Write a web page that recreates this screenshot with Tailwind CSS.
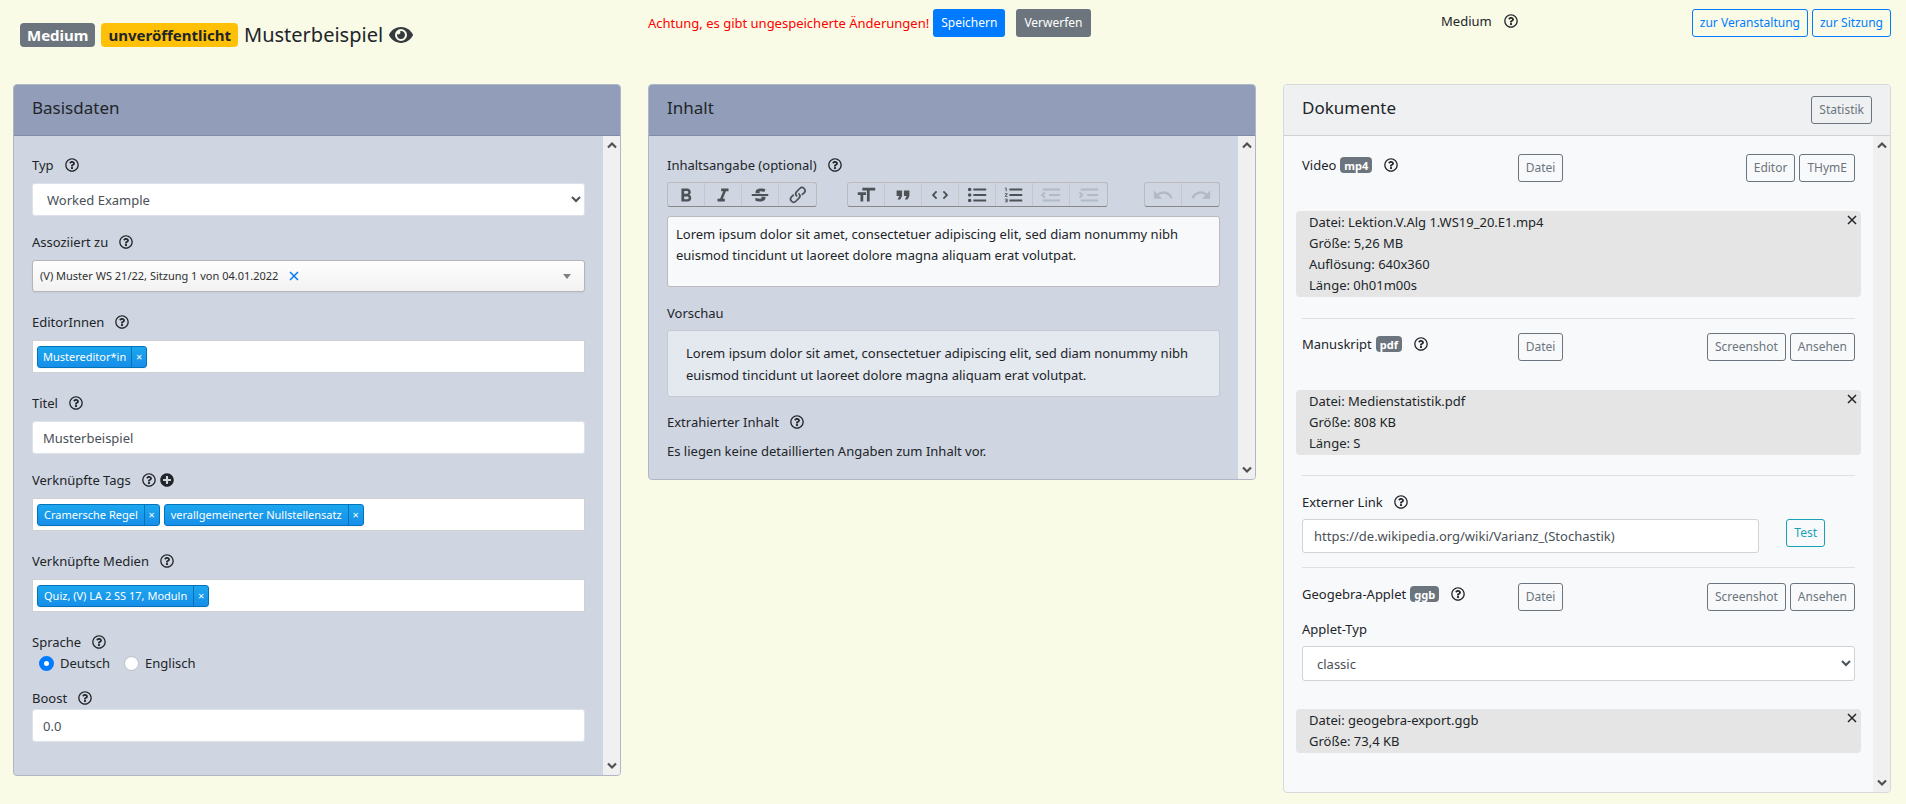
<!DOCTYPE html>
<html lang="de">
<head>
<meta charset="utf-8">
<title>Musterbeispiel – Medium</title>
<script src="https://cdn.jsdelivr.net/npm/@tailwindcss/browser@4"></script>
</head>
<body class="min-h-screen bg-[#f9fbe7] font-['Noto_Sans',sans-serif] text-[13px] leading-[22px] text-[#212529]">
<svg class="hidden" aria-hidden="true">
  <symbol id="help" viewBox="0 0 512 512"><path d="M256 8C119.043 8 8 119.083 8 256c0 136.997 111.043 248 248 248s248-111.003 248-248C504 119.083 392.957 8 256 8zm0 448c-110.532 0-200-89.431-200-200 0-110.495 89.472-200 200-200 110.491 0 200 89.471 200 200 0 110.53-89.431 200-200 200zm107.244-255.2c0 67.052-72.421 68.084-72.421 92.863V300c0 6.627-5.373 12-12 12h-45.647c-6.627 0-12-5.373-12-12v-8.659c0-35.745 27.1-50.034 47.579-61.516 17.561-9.845 28.324-16.541 28.324-29.579 0-17.246-21.999-28.693-39.784-28.693-23.189 0-33.894 10.977-48.942 29.969-4.057 5.12-11.46 6.071-16.666 2.124l-27.824-21.098c-5.107-3.872-6.251-11.066-2.644-16.363C184.846 131.491 214.94 112 261.794 112c49.071 0 101.45 38.304 101.45 88.8zM298 368c0 23.159-18.841 42-42 42s-42-18.841-42-42 18.841-42 42-42 42 18.841 42 42z"/></symbol>
  <symbol id="plus" viewBox="0 0 512 512"><path d="M256 8C119 8 8 119 8 256s111 248 248 248 248-111 248-248S393 8 256 8zm144 276c0 6.6-5.4 12-12 12h-92v92c0 6.6-5.4 12-12 12h-56c-6.6 0-12-5.4-12-12v-92h-92c-6.6 0-12-5.4-12-12v-56c0-6.6 5.4-12 12-12h92v-92c0-6.6 5.4-12 12-12h56c6.6 0 12 5.4 12 12v92h92c6.6 0 12 5.4 12 12v56z"/></symbol>
  <symbol id="up" viewBox="0 0 10 10"><path d="M1 7.5 5 3.500 9 7.500" fill="none" stroke="currentColor" stroke-width="2.200"/></symbol>
  <symbol id="down" viewBox="0 0 10 10"><path d="M1 2.500 5 6.500 9 2.500" fill="none" stroke="currentColor" stroke-width="2.200"/></symbol>
  <symbol id="close" viewBox="0 0 10 10"><path d="M1 1 9 9M9 1 1 9" fill="none" stroke="currentColor" stroke-width="1.500"/></symbol>
</svg>

<div class="pl-[13px] pr-[15px]">
  <header class="grid h-[84px] grid-cols-3 items-start gap-x-[27px]">
    <h1 class="flex items-center gap-[6px] pl-[7px] pt-[21px] text-xl leading-7">
      <span class="rounded bg-[#6c757d] px-[7px] pt-px text-[15px] font-bold leading-[23px] text-white">Medium</span>
      <span class="rounded bg-[#ffc107] px-[7px] pt-px text-[15px] font-bold leading-[23px]">unveröffentlicht</span>
      <span>Musterbeispiel</span>
      <svg class="h-[22px] w-6 fill-[#343a40]" viewBox="0 0 576 512"><path d="M572.52 241.4C518.29 135.59 410.93 64 288 64S57.68 135.64 3.48 241.41a32.35 32.35 0 0 0 0 29.19C57.71 376.41 165.07 448 288 448s230.32-71.64 284.52-177.41a32.35 32.35 0 0 0 0-29.19zM288 400a144 144 0 1 1 144-144 143.93 143.93 0 0 1-144 144zm0-240a95.31 95.31 0 0 0-25.31 3.79 47.85 47.85 0 0 1-66.9 66.9A95.78 95.78 0 1 0 288 160z"/></svg>
    </h1>
    <div class="flex items-center pt-[9px]">
      <span class="mr-1 text-[#f00]">Achtung, es gibt ungespeicherte Änderungen!</span>
      <button class="mr-[11px] h-7 rounded-[3px] bg-[#007bff] px-2 text-xs text-white">Speichern</button>
      <button class="h-7 rounded-[3px] bg-[#6c757d] px-2 text-xs text-white">Verwerfen</button>
    </div>
    <div class="grid grid-cols-[26%_1fr_auto] pt-[9px]">
      <span></span>
      <span class="flex h-6 items-center gap-3">Medium <svg class="size-[14px] fill-current"><use href="#help"/></svg></span>
      <span class="flex gap-1">
        <a href="#" class="flex h-7 items-center rounded-[3px] border border-[#007bff] px-[7px] text-xs text-[#007bff]">zur Veranstaltung</a>
        <a href="#" class="flex h-7 items-center rounded-[3px] border border-[#007bff] px-[7px] text-xs text-[#007bff]">zur Sitzung</a>
      </span>
    </div>
  </header>

  <main class="grid grid-cols-3 items-start gap-x-[27px]">
    <section class="overflow-hidden rounded border border-[#b0b6c6] bg-[#cfd5e1]">
      <h2 class="h-[51px] border-b border-[#7f8cab] bg-[#929eb9] px-[18px] pt-[11px] text-[17px] leading-6">Basisdaten</h2>
      <div class="flex">
        <form class="min-w-0 flex-1 px-[18px] pb-[33px] pt-[18px]">
          <div class="mb-[15px]">
            <div class="mb-[7px] flex items-center gap-[11px]"><label for="typ">Typ</label><svg class="size-[14px] fill-current"><use href="#help"/></svg></div>
            <select id="typ" class="h-[33px] w-full rounded-[3px] border border-[#dde1e9] bg-white px-[10px] text-[#495057]"><option>Worked Example</option></select>
          </div>
          <div class="mb-[19px]">
            <div class="mb-[7px] flex items-center gap-[11px]"><span id="assoc">Assoziiert zu</span><svg class="size-[14px] fill-current"><use href="#help"/></svg></div>
            <div role="combobox" aria-labelledby="assoc" class="flex h-8 items-center rounded-[3px] border border-[#b5b5b5] bg-linear-to-b from-[#fefefe] to-[#f2f2f2] px-[7px] text-[11px] text-[#303030] shadow-xs">
              (V) Muster WS 21/22, Sitzung 1 von 04.01.2022
              <button type="button" aria-label="Entfernen" class="ml-[11px] text-[#007bff]"><svg class="size-[10px]"><use href="#close"/></svg></button>
              <span class="ml-auto mr-[6px] border-x-4 border-t-[5px] border-x-transparent border-t-[#808080]"></span>
            </div>
          </div>
          <div class="mb-[19px]">
            <div class="mb-[7px] flex items-center gap-[11px]"><span>EditorInnen</span><svg class="size-[14px] fill-current"><use href="#help"/></svg></div>
            <div class="flex h-[33px] items-center gap-1 border border-[#d0d0d0] bg-white px-1">
              <span class="flex h-[22px] items-stretch rounded-[3px] border border-[#0073bb] bg-linear-to-b from-[#1da7ee] to-[#178ee9] text-[11px] leading-5 text-white shadow-xs"><span class="px-[5px]">Mustereditor*in</span><button type="button" class="w-[15px] border-l border-[#0073bb]">×</button></span>
            </div>
          </div>
          <div class="mb-[15px]">
            <div class="mb-[7px] flex items-center gap-[11px]"><label for="titel">Titel</label><svg class="size-[14px] fill-current"><use href="#help"/></svg></div>
            <input id="titel" value="Musterbeispiel" class="h-[33px] w-full rounded-[3px] border border-[#dde1e9] bg-white px-[10px] text-[#495057]">
          </div>
          <div class="mb-[19px]">
            <div class="mb-[7px] flex items-center gap-[11px]"><span>Verknüpfte Tags</span><span class="flex gap-1"><svg class="size-[14px] fill-current"><use href="#help"/></svg><svg class="size-[14px] fill-current"><use href="#plus"/></svg></span></div>
            <div class="flex h-[33px] items-center gap-1 border border-[#d0d0d0] bg-white px-1">
              <span class="flex h-[22px] items-stretch rounded-[3px] border border-[#0073bb] bg-linear-to-b from-[#1da7ee] to-[#178ee9] text-[11px] leading-5 text-white shadow-xs"><span class="px-[6px]">Cramersche Regel</span><button type="button" class="w-[15px] border-l border-[#0073bb]">×</button></span>
              <span class="flex h-[22px] items-stretch rounded-[3px] border border-[#0073bb] bg-linear-to-b from-[#1da7ee] to-[#178ee9] text-[11px] leading-5 text-white shadow-xs"><span class="px-[6px]">verallgemeinerter Nullstellensatz</span><button type="button" class="w-[15px] border-l border-[#0073bb]">×</button></span>
            </div>
          </div>
          <div class="mb-[19px]">
            <div class="mb-[7px] flex items-center gap-[11px]"><span>Verknüpfte Medien</span><svg class="size-[14px] fill-current"><use href="#help"/></svg></div>
            <div class="flex h-[33px] items-center gap-1 border border-[#d0d0d0] bg-white px-1">
              <span class="flex h-[22px] items-stretch rounded-[3px] border border-[#0073bb] bg-linear-to-b from-[#1da7ee] to-[#178ee9] text-[11px] leading-5 text-white shadow-xs"><span class="px-[6px]">Quiz, (V) LA 2 SS 17, Moduln</span><button type="button" class="w-[15px] border-l border-[#0073bb]">×</button></span>
            </div>
          </div>
          <div class="mb-[13px]">
            <div class="flex items-center gap-[11px]"><span>Sprache</span><svg class="size-[14px] fill-current"><use href="#help"/></svg></div>
            <div class="flex gap-[14px] pl-[7px] leading-[21px]">
              <label class="flex items-center gap-[6px]"><input type="radio" name="sprache" checked class="size-[15px] appearance-none rounded-full border border-[#b9bec8] bg-white checked:border-[5px] checked:border-[#007bff]">Deutsch</label>
              <label class="flex items-center gap-[6px]"><input type="radio" name="sprache" class="size-[15px] appearance-none rounded-full border border-[#b9bec8] bg-white checked:border-[5px] checked:border-[#007bff]">Englisch</label>
            </div>
          </div>
          <div class="flex items-center gap-[11px]"><label for="boost">Boost</label><svg class="size-[14px] fill-current"><use href="#help"/></svg></div>
          <input id="boost" value="0.0" class="block h-[33px] w-full rounded-[3px] border border-[#dde1e9] bg-white px-[10px] text-[#495057]">
        </form>
        <div class="flex w-[17px] flex-col items-center justify-between bg-[#f0f0f0] py-1 text-[#505050]"><svg class="size-[10px]"><use href="#up"/></svg><svg class="size-[10px]"><use href="#down"/></svg></div>
      </div>
    </section>

    <section class="overflow-hidden rounded border border-[#b0b6c6] bg-[#cfd5e1]">
      <h2 class="h-[51px] border-b border-[#7f8cab] bg-[#929eb9] px-[18px] pt-[11px] text-[17px] leading-6">Inhalt</h2>
      <div class="flex">
        <div class="min-w-0 flex-1 px-[18px] pb-[17px] pt-[18px]">
          <div class="mb-[6px] flex items-center gap-[11px]"><label for="inhalt">Inhaltsangabe (optional)</label><svg class="size-[14px] fill-current"><use href="#help"/></svg></div>
          <div class="mb-[9px] flex fill-[#4d5257] text-[#4d5257]">
            <div class="mr-[30px] flex divide-x divide-[#c5c7cb] rounded-[3px] border border-[#bbb] border-b-[#888]">
              <button class="flex h-[23px] w-[37px] items-center justify-center" aria-label="Fett"><svg class="size-[22px]" viewBox="0 0 24 24"><path d="M15.6 11.79c.97-.67 1.65-1.77 1.65-2.79 0-2.260-1.750-4-4-4H7v14h7.040c2.090 0 3.710-1.700 3.710-3.790 0-1.520-.86-2.820-2.150-3.420zM10 7.500h3c.83 0 1.500.67 1.500 1.500s-.67 1.500-1.500 1.500h-3v-3zm3.500 9H10v-3h3.500c.83 0 1.500.67 1.500 1.500s-.67 1.500-1.500 1.500z"/></svg></button>
              <button class="flex h-[23px] w-[37px] items-center justify-center" aria-label="Kursiv"><svg class="size-[22px]" viewBox="0 0 24 24"><path d="M10 5v3h2.210l-3.420 8H6v3h8v-3h-2.210l3.420-8H18V5z"/></svg></button>
              <button class="flex h-[23px] w-[37px] items-center justify-center" aria-label="Durchgestrichen"><svg class="size-[22px]" viewBox="0 0 24 24"><path d="M12.73 14l.28.14c.26.15.45.3.57.44.12.14.18.3.18.5 0 .3-.15.56-.44.75-.3.2-.76.3-1.390.3A13.520 13.520 0 0 1 7 14.950v3.370a10.640 10.640 0 0 0 4.840.88c1.260 0 2.350-.19 3.280-.56.93-.37 1.640-.9 2.140-1.570s.74-1.450.74-2.320c0-.26-.02-.51-.06-.75h-5.210zm-5.500-4c-.08-.34-.12-.7-.12-1.100 0-1.290.52-2.300 1.580-3.020 1.050-.72 2.500-1.080 4.340-1.080 1.620 0 3.280.34 4.970 1l-1.300 2.930c-1.470-.6-2.730-.9-3.800-.9-.55 0-.96.08-1.200.26-.26.17-.38.38-.38.64 0 .27.16.52.48.74.17.12.53.3 1.050.53H7.230zM3 13h18v-2H3v2z"/></svg></button>
              <button class="flex h-[23px] w-[37px] items-center justify-center" aria-label="Link"><svg class="size-[22px]" viewBox="0 0 24 24"><path d="M9.88 13.7a4.3 4.3 0 0 1 0-6.070l3.370-3.370a4.260 4.260 0 0 1 6.070 0 4.300 4.300 0 0 1 0 6.060l-1.960 1.720a.91.91 0 1 1-1.300-1.300l1.970-1.710a2.460 2.460 0 0 0-3.480-3.480l-3.380 3.370a2.460 2.460 0 0 0 0 3.480.91.91 0 1 1-1.300 1.300z"/><path d="M4.250 19.460a4.300 4.300 0 0 1 0-6.070l1.930-1.900a.91.91 0 1 1 1.300 1.300l-1.930 1.900a2.460 2.460 0 0 0 3.480 3.480l3.370-3.380c.96-.96.96-2.520 0-3.480a.91.91 0 1 1 1.300-1.300 4.300 4.300 0 0 1 0 6.070l-3.380 3.380a4.260 4.260 0 0 1-6.070 0z"/></svg></button>
            </div>
            <div class="mr-auto flex divide-x divide-[#c5c7cb] rounded-[3px] border border-[#bbb] border-b-[#888]">
              <button class="flex h-[23px] w-[37px] items-center justify-center" aria-label="Überschrift"><svg class="size-[22px]" viewBox="0 0 24 24"><path d="M12 9v3H9v7H6v-7H3V9h9zM8 4h14v3h-6v12h-3V7H8V4z"/></svg></button>
              <button class="flex h-[23px] w-[37px] items-center justify-center" aria-label="Zitat"><svg class="size-[22px]" viewBox="0 0 24 24"><path d="M6 17h3l2-4V7H5v6h3zm8 0h3l2-4V7h-6v6h3z"/></svg></button>
              <button class="flex h-[23px] w-[37px] items-center justify-center" aria-label="Code"><svg class="size-[22px]" viewBox="0 0 24 24"><path d="M18.200 12L15 15.200l1.400 1.400L21 12l-4.600-4.600L15 8.800l3.200 3.200zM5.800 12L9 8.800 7.600 7.400 3 12l4.600 4.600L9 15.200 5.800 12z"/></svg></button>
              <button class="flex h-[23px] w-[37px] items-center justify-center" aria-label="Aufzählung"><svg class="size-[22px]" viewBox="0 0 24 24"><path d="M4 4a2 2 0 1 0 0 4 2 2 0 0 0 0-4zm0 6a2 2 0 1 0 0 4 2 2 0 0 0 0-4zm0 6a2 2 0 1 0 0 4 2 2 0 0 0 0-4zm4 3h14v-2H8v2zm0-6h14v-2H8v2zm0-8v2h14V5H8z"/></svg></button>
              <button class="flex h-[23px] w-[37px] items-center justify-center" aria-label="Nummerierung"><svg class="size-[22px]" viewBox="0 0 24 24"><path d="M2 17h2v.5H3v1h1v.5H2v1h3v-4H2v1zm1-9h1V4H2v1h1v3zm-1 3h1.800L2 13.100v.9h3v-1H3.200L5 10.900V10H2v1zm5-6v2h14V5H7zm0 14h14v-2H7v2zm0-6h14v-2H7v2z"/></svg></button>
              <button disabled class="flex h-[23px] w-[37px] items-center justify-center" aria-label="Ausrücken"><svg class="size-[22px] opacity-20" viewBox="0 0 24 24"><path d="M3 19h19v-2H3v2zm7-6h12v-2H10v2zm-8.300-.3l2.800 2.900L6 14.200 4 12l2-2-1.400-1.500L1 12l.7.7zM3 5v2h19V5H3z"/></svg></button>
              <button disabled class="flex h-[23px] w-[37px] items-center justify-center" aria-label="Einrücken"><svg class="size-[22px] opacity-20" viewBox="0 0 24 24"><path d="M3 19h19v-2H3v2zm7-6h12v-2H10v2zm-6.900-1L1 14.200l1.400 1.400L6 12l-.7-.7-2.800-2.800L1 9.900 3.100 12zM3 5v2h19V5H3z"/></svg></button>
            </div>
            <div class="flex divide-x divide-[#c5c7cb] rounded-[3px] border border-[#bbb] border-b-[#888]">
              <button disabled class="flex h-[23px] w-[37px] items-center justify-center" aria-label="Rückgängig"><svg class="size-[22px] opacity-20" viewBox="0 0 24 24"><path d="M12.500 8c-2.600 0-5 1-6.900 2.600L2 7v9h9l-3.600-3.600A8 8 0 0 1 20 16l2.400-.8a10.500 10.500 0 0 0-10-7.200z"/></svg></button>
              <button disabled class="flex h-[23px] w-[37px] items-center justify-center" aria-label="Wiederholen"><svg class="size-[22px] opacity-20" viewBox="0 0 24 24"><path d="M18.400 10.600a10.500 10.500 0 0 0-16.900 4.600L4 16a8 8 0 0 1 12.700-3.600L13 16h9V7l-3.600 3.600z"/></svg></button>
            </div>
          </div>
          <textarea id="inhalt" class="mb-[15px] block h-[71px] w-full resize-none rounded-[3px] border border-[#bbb] bg-[#f8f9fb] px-2 py-[7px] leading-[21px]">Lorem ipsum dolor sit amet, consectetuer adipiscing elit, sed diam nonummy nibh euismod tincidunt ut laoreet dolore magna aliquam erat volutpat.</textarea>
          <div class="mb-[6px]">Vorschau</div>
          <div class="mb-[14px] rounded-[3px] border border-[#c4c9d2] bg-[#e4e8ef] px-[18px] pb-[10px] pt-[11px]">Lorem ipsum dolor sit amet, consectetuer adipiscing elit, sed diam nonummy nibh euismod tincidunt ut laoreet dolore magna aliquam erat volutpat.</div>
          <div class="mb-[7px] flex items-center gap-[11px]"><span>Extrahierter Inhalt</span><svg class="size-[14px] fill-current"><use href="#help"/></svg></div>
          <p>Es liegen keine detaillierten Angaben zum Inhalt vor.</p>
        </div>
        <div class="flex w-[17px] flex-col items-center justify-between bg-[#f0f0f0] py-1 text-[#505050]"><svg class="size-[10px]"><use href="#up"/></svg><svg class="size-[10px]"><use href="#down"/></svg></div>
      </div>
    </section>

    <section class="overflow-hidden rounded border border-[#d6d9da] bg-[#f8f9fb]">
      <div class="flex h-[51px] items-start justify-between border-b border-[#cfd1d4] bg-[#eff0f2] px-[18px] pt-[11px]">
        <h2 class="text-[17px] leading-6">Dokumente</h2>
        <button class="h-7 rounded-[3px] border border-[#6c757d] px-[7px] text-xs text-[#6c757d]">Statistik</button>
      </div>
      <div class="flex">
        <div class="min-w-0 flex-1 px-[18px] pb-[39px] pt-[18px]">
          <div class="mb-[29px] grid grid-cols-[39%_1fr_auto] items-start">
            <span class="flex items-center"><span class="mr-1">Video</span><span class="mr-3 rounded bg-[#6c757d] px-1 pt-px text-[11px] font-bold leading-[15px] text-white">mp4</span><svg class="size-[14px] fill-current"><use href="#help"/></svg></span>
            <span><button class="block h-7 rounded-[3px] border border-[#6c757d] px-[7px] text-xs text-[#6c757d]">Datei</button></span>
            <span class="flex gap-1"><button class="h-7 rounded-[3px] border border-[#6c757d] px-[7px] text-xs text-[#6c757d]">Editor</button><button class="h-7 rounded-[3px] border border-[#6c757d] px-[7px] text-xs text-[#6c757d]">THymE</button></span>
          </div>
          <div class="-mx-[6px] flex items-start justify-between rounded bg-[#e5e5e5] py-px pl-[13px] pr-1 leading-[21px]">
            <div>Datei: Lektion.V.Alg 1.WS19_20.E1.mp4<br>Größe: 5,26 MB<br>Auflösung: 640x360<br>Länge: 0h01m00s</div>
            <button aria-label="Video entfernen" class="mt-[3px]"><svg class="size-[10px]"><use href="#close"/></svg></button>
          </div>
          <hr class="mb-[14px] mt-[21px] border-[#dfe0e2]">
          <div class="mb-[29px] grid grid-cols-[39%_1fr_auto] items-start">
            <span class="flex items-center"><span class="mr-1">Manuskript</span><span class="mr-3 rounded bg-[#6c757d] px-1 pt-px text-[11px] font-bold leading-[15px] text-white">pdf</span><svg class="size-[14px] fill-current"><use href="#help"/></svg></span>
            <span><button class="block h-7 rounded-[3px] border border-[#6c757d] px-[7px] text-xs text-[#6c757d]">Datei</button></span>
            <span class="flex gap-1"><button class="h-7 rounded-[3px] border border-[#6c757d] px-[7px] text-xs text-[#6c757d]">Screenshot</button><button class="h-7 rounded-[3px] border border-[#6c757d] px-[7px] text-xs text-[#6c757d]">Ansehen</button></span>
          </div>
          <div class="-mx-[6px] flex items-start justify-between rounded bg-[#e5e5e5] py-px pl-[13px] pr-1 leading-[21px]">
            <div>Datei: Medienstatistik.pdf<br>Größe: 808 KB<br>Länge: S</div>
            <button aria-label="Manuskript entfernen" class="mt-[3px]"><svg class="size-[10px]"><use href="#close"/></svg></button>
          </div>
          <hr class="mb-[15px] mt-[20px] border-[#dfe0e2]">
          <div class="mb-[6px] flex items-center gap-[11px]"><label for="link">Externer Link</label><svg class="size-[14px] fill-current"><use href="#help"/></svg></div>
          <div class="flex items-start gap-[27px] pr-[30px]">
            <input id="link" value="https://de.wikipedia.org/wiki/Varianz_(Stochastik)" class="h-[34px] min-w-0 flex-1 rounded-[3px] border border-[#ced4da] bg-white px-[11px] text-[#495057]">
            <button class="h-7 rounded-[3px] border border-[#17a2b8] px-[7px] text-xs text-[#17a2b8]">Test</button>
          </div>
          <hr class="mb-[15px] mt-[14px] border-[#dfe0e2]">
          <div class="mb-[7px] grid grid-cols-[39%_1fr_auto] items-start">
            <span class="flex items-center"><span class="mr-1">Geogebra-Applet</span><span class="mr-3 rounded bg-[#6c757d] px-1 pt-px text-[11px] font-bold leading-[15px] text-white">ggb</span><svg class="size-[14px] fill-current"><use href="#help"/></svg></span>
            <span><button class="block h-7 rounded-[3px] border border-[#6c757d] px-[7px] text-xs text-[#6c757d]">Datei</button></span>
            <span class="flex gap-1"><button class="h-7 rounded-[3px] border border-[#6c757d] px-[7px] text-xs text-[#6c757d]">Screenshot</button><button class="h-7 rounded-[3px] border border-[#6c757d] px-[7px] text-xs text-[#6c757d]">Ansehen</button></span>
          </div>
          <label for="applet" class="mb-[6px] block">Applet-Typ</label>
          <select id="applet" class="mb-7 block h-[35px] w-full rounded-[3px] border border-[#ced4da] bg-white px-[10px] text-[#495057]"><option>classic</option></select>
          <div class="-mx-[6px] flex items-start justify-between rounded bg-[#e5e5e5] py-px pl-[13px] pr-1 leading-[21px]">
            <div>Datei: geogebra-export.ggb<br>Größe: 73,4 KB</div>
            <button aria-label="Applet entfernen" class="mt-[3px]"><svg class="size-[10px]"><use href="#close"/></svg></button>
          </div>
        </div>
        <div class="flex w-[17px] flex-col items-center justify-between bg-[#f0f0f0] py-1 text-[#505050]"><svg class="size-[10px]"><use href="#up"/></svg><svg class="size-[10px]"><use href="#down"/></svg></div>
      </div>
    </section>
  </main>
</div>
</body>
</html>
